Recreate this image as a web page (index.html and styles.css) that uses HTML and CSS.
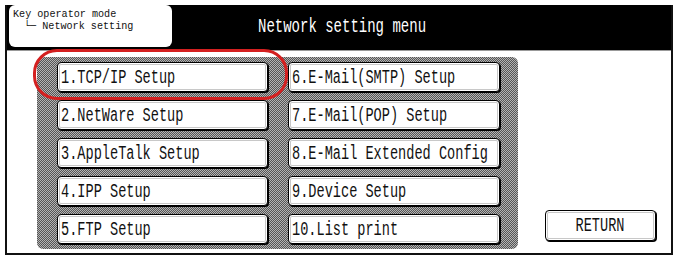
FILE: index.html
```html
<!DOCTYPE html>
<html lang="en">
<head>
<meta charset="UTF-8">
<meta name="viewport" content="width=device-width, initial-scale=1.0">
<title>Network setting menu</title>
<link rel="stylesheet" href="styles.css">
</head>
<body>

<div class="screen">
  <div class="header">
    <div class="mode">
      <div class="mode-line">Key operator mode</div>
      <div class="mode-line sub">└─ Network setting</div>
    </div>
    <div class="title"><span class="narrow">Network setting menu</span></div>
  </div>

  <div class="content">
    <div class="panel">
      <button class="key"><span class="narrow">1.TCP/IP Setup</span></button>
      <button class="key"><span class="narrow">2.NetWare Setup</span></button>
      <button class="key"><span class="narrow">3.AppleTalk Setup</span></button>
      <button class="key"><span class="narrow">4.IPP Setup</span></button>
      <button class="key"><span class="narrow">5.FTP Setup</span></button>
      <button class="key"><span class="narrow">6.E-Mail(SMTP) Setup</span></button>
      <button class="key"><span class="narrow">7.E-Mail(POP) Setup</span></button>
      <button class="key"><span class="narrow">8.E-Mail Extended Config</span></button>
      <button class="key"><span class="narrow">9.Device Setup</span></button>
      <button class="key"><span class="narrow">10.List print</span></button>
    </div>
    <div class="side">
      <button class="key return"><span class="narrow">RETURN</span></button>
    </div>
  </div>

  <div class="highlight"></div>
</div>

</body>
</html>
```

FILE: styles.css
```css
body {
  margin: 0;
  background-color: #fff;
  font-family: "Liberation Mono", "DejaVu Sans Mono", monospace;
  color: #111;
}
.screen {
  position: relative;
  width: 664px;
  height: 248px;
  margin: 5px 0 0 5px;
  border: 2px solid #111;
  border-top: none;
  display: flex;
  flex-direction: column;
}
.header {
  height: 45px;
  background-color: #000;
  border-bottom: 1px solid #999;
  display: flex;
  align-items: flex-start;
  flex-shrink: 0;
}
.mode {
  width: 159px;
  height: 39px;
  margin-left: 2px;
  padding: 3px 0 0 4px;
  background-color: #fff;
  border-radius: 6px;
  font-size: 11px;
  line-height: 12px;
}
.mode-line {
  transform: scaleX(0.92);
  transform-origin: left center;
  white-space: pre;
}
.mode-line.sub {
  padding-left: 12px;
}
.title {
  margin: 12px 0 0 86px;
  color: #fff;
  font-size: 20px;
  line-height: 20px;
  white-space: pre;
}
.narrow {
  display: inline-block;
  transform: scaleX(0.68);
  transform-origin: left center;
  white-space: pre;
}
.title .narrow {
  transform: scaleX(0.7);
}
.content {
  flex: 1;
  display: flex;
}
.panel {
  margin: 6px 0 0 30px;
  padding: 5px 18px 5px 20px;
  height: 182px;
  display: grid;
  grid-template-columns: 211px 212px;
  grid-template-rows: repeat(5, 30px);
  grid-auto-flow: column;
  column-gap: 20px;
  row-gap: 8px;
  border-radius: 6px;
  background: repeating-conic-gradient(#555 0 25%, #b4b4b4 0 50%) 0 0 / 2px 2px;
}
.key {
  padding: 0 0 0 3px;
  margin: 0;
  text-align: left;
  font-family: "Liberation Mono", "DejaVu Sans Mono", monospace;
  font-size: 20px;
  color: #111;
  background-color: #fff;
  border: 1px solid #000;
  border-radius: 4px;
  box-shadow: 1px 1px 0 #000, inset 0 0 0 1px #fff, inset 0 0 0 2px #c8c8c8;
  overflow: hidden;
}
.side {
  flex: 1;
  display: flex;
  align-items: flex-end;
  padding: 0 0 12px 27px;
}
.return {
  width: 111px;
  height: 31px;
  padding: 0;
  text-align: center;
}
.return .narrow {
  transform-origin: center center;
}
.highlight {
  position: absolute;
  left: 26px;
  top: 44px;
  width: 249px;
  height: 45px;
  border: 3px solid #d42020;
  border-radius: 24px;
}
```
